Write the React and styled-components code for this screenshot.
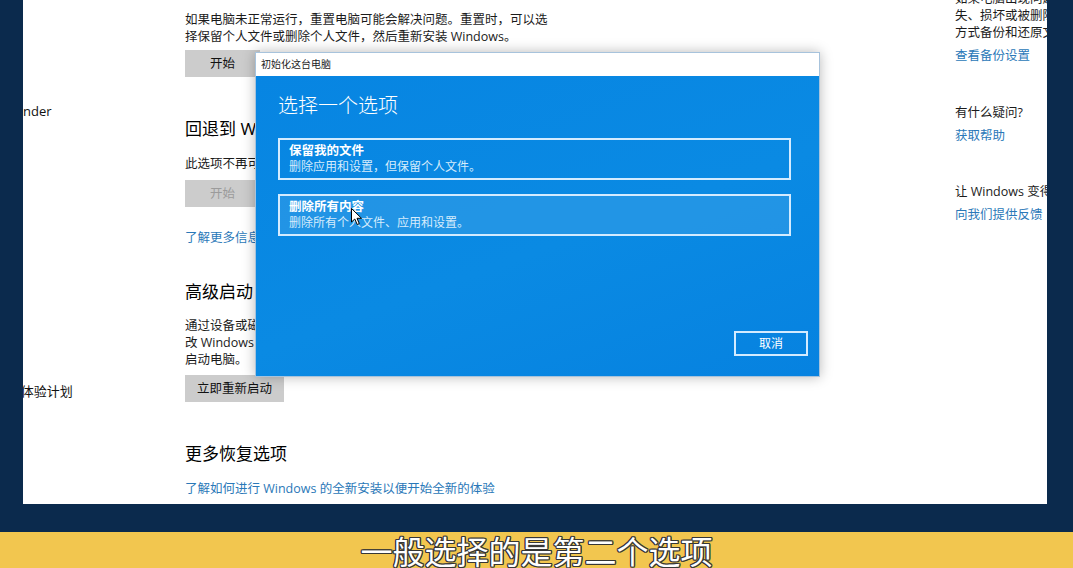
import React from "react";
import styled, { createGlobalStyle } from "styled-components";

const GlobalStyle = createGlobalStyle`
  html, body {
    margin: 0;
    padding: 0;
    background: #0b2a4d;
  }
  body {
    font-family: "Open Sans", "Noto Sans CJK SC", sans-serif;
    overflow: hidden;
  }
`;

const Frame = styled.div`
  width: 1073px;
  height: 568px;
  display: flex;
  flex-direction: column;
  background: #0b2a4d;
  overflow: hidden;
`;

const Monitor = styled.div`
  height: 532px;
  padding-left: 23px;
  box-sizing: border-box;
`;

const Screen = styled.div`
  position: relative;
  width: 1024px;
  height: 504px;
  background: #ffffff;
  overflow: hidden;
  display: grid;
  grid-template-columns: 162px 770px 1fr;
  align-items: start;
  color: #1b1b1b;
  font-size: 12.5px;
  line-height: 17px;
`;

/* settings nav, scrolled so that most labels sit off the left edge */
const Nav = styled.nav`
  padding-top: 91px;
  margin-left: -87px;
  white-space: nowrap;
  font-size: 13px;
`;

const NavItem = styled.div`
  height: 40px;
  display: flex;
  align-items: center;
  color: #111;
`;

const Main = styled.main`
  padding-top: 11px;
  display: flex;
  flex-direction: column;
  align-items: flex-start;
`;

const Para = styled.p`
  margin: ${(p) => p.$top || 0}px 0 0;
  width: 380px;
  white-space: nowrap;
`;

const Heading = styled.h2`
  margin: ${(p) => p.$top || 0}px 0 0;
  font-size: 17px;
  line-height: 24px;
  font-weight: 400;
  color: #000;
  white-space: nowrap;
`;

const GrayButton = styled.button`
  margin-top: ${(p) => p.$top || 0}px;
  min-width: 75px;
  height: 27px;
  padding: 0 12px;
  border: none;
  background: #cccccc;
  color: ${(p) => (p.disabled ? "#9b9b9b" : "#111")};
  font: inherit;
  font-size: 12.5px;
`;

const Link = styled.a`
  display: block;
  margin-top: ${(p) => p.$top || 0}px;
  color: #2a78b8;
  text-decoration: none;
  white-space: nowrap;
`;

const Aside = styled.aside`
  margin-top: -10px;
  white-space: nowrap;
`;

const Dialog = styled.div`
  position: absolute;
  left: 232px;
  top: 52px;
  width: 565px;
  height: 325px;
  box-sizing: border-box;
  display: flex;
  flex-direction: column;
  border: 1px solid #a7c3dc;
  box-shadow: 0 0 12px rgba(0, 0, 0, 0.28);
`;

const TitleBar = styled.div`
  height: 23px;
  flex: none;
  display: flex;
  align-items: center;
  padding-left: 5px;
  background: #ffffff;
  color: #222;
  font-size: 10px;
`;

const DialogBody = styled.div`
  flex: 1;
  display: flex;
  flex-direction: column;
  padding: 16px 11px 20px 22px;
  background: linear-gradient(160deg, #0785e2 0%, #0a8ae3 55%, #0682e0 100%);
  color: #fff;
`;

const DialogTitle = styled.h1`
  margin: 0;
  font-size: 20px;
  line-height: 28px;
  font-weight: 300;
`;

const Option = styled.div`
  position: relative;
  margin-top: ${(p) => p.$top}px;
  width: 513px;
  height: 42px;
  box-sizing: border-box;
  padding: 3px 9px;
  border: 2px solid #d3ebff;
  background: ${(p) => (p.$hover ? "rgba(255, 255, 255, 0.1)" : "transparent")};
`;

const OptionTitle = styled.div`
  font-size: 12.5px;
  line-height: 16px;
  font-weight: 700;
`;

const OptionText = styled.div`
  font-size: 12px;
  line-height: 16px;
  color: #d6ecfc;
`;

const Footer = styled.div`
  margin-top: auto;
  display: flex;
  justify-content: flex-end;
`;

const OutlineButton = styled.button`
  width: 74px;
  height: 25px;
  border: 2px solid #d3ebff;
  background: transparent;
  color: #fff;
  font: inherit;
  font-size: 12px;
`;

const Pointer = styled.svg`
  position: absolute;
  left: 71px;
  top: 12px;
`;

const Caption = styled.div`
  height: 36px;
  display: flex;
  align-items: center;
  justify-content: center;
  background: #f2c64f;
  color: #fff;
  font-family: "Noto Sans CJK SC", sans-serif;
  font-size: 32px;
  line-height: 36px;
  text-shadow:
    1.3px 0 0 #363636, -1.3px 0 0 #363636, 0 1.3px 0 #363636, 0 -1.3px 0 #363636,
    1px 1px 0 #363636, -1px -1px 0 #363636, 1px -1px 0 #363636, -1px 1px 0 #363636;
`;

const navItems = [
  "Windows Defender",
  "备份",
  "疑难解答",
  "恢复",
  "激活",
  "查找我的设备",
  "开发者选项",
  "Windows 预览体验计划",
];

export default function App() {
  return (
    <Frame>
      <GlobalStyle />
      <Monitor>
        <Screen>
          <Nav>
            {navItems.map((item) => (
              <NavItem key={item}>{item}</NavItem>
            ))}
          </Nav>

          <Main>
            <Para>
              如果电脑未正常运行，重置电脑可能会解决问题。重置时，可以选
              <br />
              择保留个人文件或删除个人文件，然后重新安装 Windows。
            </Para>
            <GrayButton $top={5}>开始</GrayButton>

            <Heading $top={40}>回退到 Windows 10 的上一个版本</Heading>
            <Para $top={14}>此选项不再可用，因为你的电脑已升级 10 天以上。</Para>
            <GrayButton $top={8} disabled>
              开始
            </GrayButton>
            <Link $top={22}>了解更多信息</Link>

            <Heading $top={34}>高级启动</Heading>
            <Para $top={13}>
              通过设备或磁盘(如 U 盘或 DVD)启动，更改 Windows 固件设置，更
              <br />
              改 Windows 启动设置，或者从系统映像还原 Windows。这将重新
              <br />
              启动电脑。
            </Para>
            <GrayButton $top={7}>立即重新启动</GrayButton>

            <Heading $top={40}>更多恢复选项</Heading>
            <Link $top={14}>了解如何进行 Windows 的全新安装以便开始全新的体验</Link>
          </Main>

          <Aside>
            <Para>
              如果电脑出现问题，原始文件可能会丢
              <br />
              失、损坏或被删除，请通过多种
              <br />
              方式备份和还原文件。
            </Para>
            <Link $top={6}>查看备份设置</Link>
            <Para $top={40}>有什么疑问?</Para>
            <Link $top={6}>获取帮助</Link>
            <Para $top={39}>让 Windows 变得更好</Para>
            <Link $top={6}>向我们提供反馈</Link>
          </Aside>

          <Dialog>
            <TitleBar>初始化这台电脑</TitleBar>
            <DialogBody>
              <DialogTitle>选择一个选项</DialogTitle>
              <Option $top={18}>
                <OptionTitle>保留我的文件</OptionTitle>
                <OptionText>删除应用和设置，但保留个人文件。</OptionText>
              </Option>
              <Option $top={14} $hover>
                <OptionTitle>删除所有内容</OptionTitle>
                <OptionText>删除所有个人文件、应用和设置。</OptionText>
                <Pointer width="12" height="18" viewBox="0 0 12 18">
                  <path
                    d="M0.5 0.5 L0.5 14 L3.8 11 L6.2 16.5 L8.3 15.6 L6 10.3 L10.5 10.3 Z"
                    fill="#fff"
                    stroke="#000"
                    strokeWidth="1"
                    strokeLinejoin="round"
                  />
                </Pointer>
              </Option>
              <Footer>
                <OutlineButton>取消</OutlineButton>
              </Footer>
            </DialogBody>
          </Dialog>
        </Screen>
      </Monitor>
      <Caption>一般选择的是第二个选项</Caption>
    </Frame>
  );
}
